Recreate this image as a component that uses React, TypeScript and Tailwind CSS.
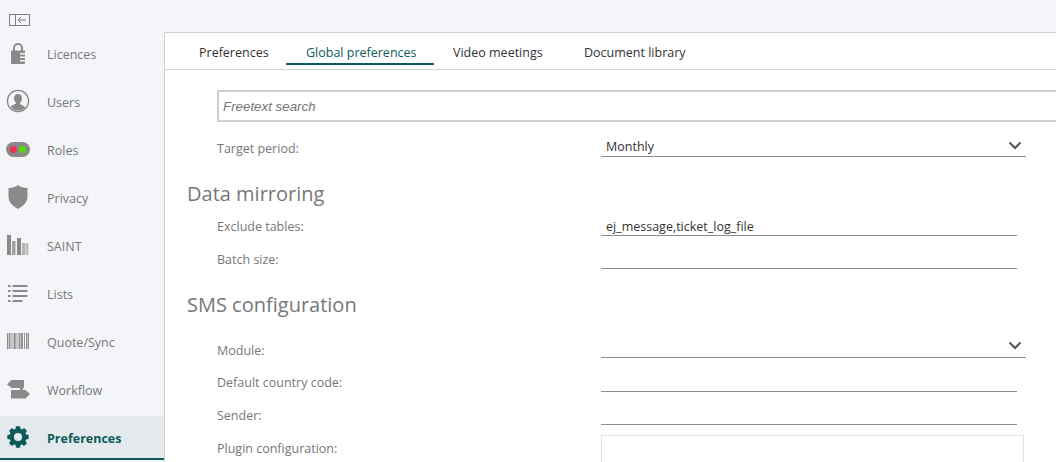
import { ReactNode } from "react";

const grey = "#8a8a8a";

const LockIcon = () => (
  <svg width="14" height="22" viewBox="0 0 14 22" fill={grey}>
    <path d="M2 9V6a5 5 0 0 1 10 0v3h-2V6a3 3 0 0 0-6 0v3z" />
    <path d="M0 8.500h14v2.500H9v1.500h5v2H9v1.500h5v2H9v1.500h5v1.500a1 1 0 0 1-1 1H1a1 1 0 0 1-1-1z" />
  </svg>
);

const UserIcon = () => (
  <svg width="24" height="24" viewBox="0 0 24 24">
    <circle cx="12" cy="12" r="10.6" fill="none" stroke={grey} strokeWidth="1.3" />
    <path
      fill={grey}
      d="M12 5c2.600 0 4 2 4 4.400 0 2-1 3.600-2 4.600v1.200c1.800.8 4 1.400 5.300 3.300A9.500 9.500 0 0 1 12 21.500a9.500 9.500 0 0 1-7.300-3.500C6 16.100 8.200 15.500 10 14.700V14c-1-1-2-2.600-2-4.600C8 7 9.400 5 12 5z"
    />
  </svg>
);

const RolesIcon = () => (
  <svg width="24" height="15" viewBox="0 0 24 15">
    <rect x="0" y="0" width="24" height="15" rx="7.500" fill={grey} />
    <circle cx="7.300" cy="7.500" r="3.500" fill="#f0304f" />
    <circle cx="16.500" cy="7.500" r="3.500" fill="#55d808" />
  </svg>
);

const ShieldIcon = () => (
  <svg width="20" height="24" viewBox="0 0 20 24" fill={grey}>
    <path d="M10 0c2 1.800 5 2.800 9.500 3v9c0 5-4 9-9.500 12C4.500 21 .5 17 .5 12V3C5 2.800 8 1.800 10 0z" />
  </svg>
);

const BarsIcon = () => (
  <svg width="22" height="20" viewBox="0 0 22 20" fill={grey}>
    <rect x="0" y="0" width="4" height="20" />
    <rect x="5" y="6" width="3.500" height="14" opacity="0.8" />
    <rect x="10" y="3" width="4" height="17" />
    <rect x="15" y="8" width="3.500" height="12" opacity="0.6" />
    <rect x="19" y="8" width="2.500" height="12" opacity="0.5" />
  </svg>
);

const ListIcon = () => (
  <svg width="20" height="19" viewBox="0 0 20 19" fill={grey}>
    <rect x="0" y="1" width="2.500" height="2" />
    <rect x="4.500" y="1" width="15" height="2" />
    <rect x="0" y="6" width="2.500" height="2" />
    <rect x="4.500" y="6" width="15" height="2" />
    <rect x="0" y="11" width="2.500" height="2" />
    <rect x="4.500" y="11" width="15" height="2" />
    <rect x="0" y="16" width="2.500" height="2" />
    <rect x="4.500" y="16" width="10" height="2" />
  </svg>
);

const BarcodeIcon = () => (
  <svg width="22" height="16" viewBox="0 0 22 16" fill={grey}>
    {[0, 2, 3.500, 5.500, 7, 8.500, 10.500, 12, 13.500, 15, 17, 19, 20.500].map((x, i) => (
      <rect key={i} x={x} y="0" width={i % 4 === 0 ? 1.400 : 0.900} height="16" />
    ))}
  </svg>
);

const SignIcon = () => (
  <svg width="23" height="19" viewBox="0 0 23 19" fill={grey}>
    <path d="M4.500 0H17v8H4.500L0 4.200z" />
    <path d="M4 10h14.500l4.500 4-4.500 4.500H4z" />
    <rect x="13" y="8" width="3" height="2" />
  </svg>
);

const GearIcon = () => (
  <svg width="22" height="22" viewBox="0 0 22 22" fill="#0b5c58">
    <circle cx="11" cy="11" r="6.300" fill="none" stroke="#0b5c58" strokeWidth="4.400" />
    {[0, 45, 90, 135, 180, 225, 270, 315].map((a) => (
      <rect key={a} x="8.700" y="0.300" width="4.600" height="4" rx="1" transform={`rotate(${a} 11 11)`} />
    ))}
  </svg>
);

const ChevronIcon = () => (
  <svg width="14" height="9" viewBox="0 0 14 9" fill="none" stroke="#555" strokeWidth="2">
    <path d="M1.500 1.500 7 7l5.500-5.500" />
  </svg>
);

const CollapseIcon = () => (
  <svg width="21" height="12" viewBox="0 0 21 12" fill="none" stroke="#7d7d7d">
    <rect x="0.500" y="0.500" width="20" height="11" />
    <path d="M6.500 1v10" />
    <path d="M17 6H9M12 3l-3 3 3 3" />
  </svg>
);

const navItems: { label: string; icon: ReactNode }[] = [
  { label: "Licences", icon: <LockIcon /> },
  { label: "Users", icon: <UserIcon /> },
  { label: "Roles", icon: <RolesIcon /> },
  { label: "Privacy", icon: <ShieldIcon /> },
  { label: "SAINT", icon: <BarsIcon /> },
  { label: "Lists", icon: <ListIcon /> },
  { label: "Quote/Sync", icon: <BarcodeIcon /> },
  { label: "Workflow", icon: <SignIcon /> },
];

function Field({ label, className, children }: { label: string; className: string; children?: ReactNode }) {
  return (
    <div className={`flex ${className}`}>
      <div className="w-[414px] pl-[30px] text-[12.5px] leading-[17px] text-[#777]">{label}</div>
      {children}
    </div>
  );
}

function TextLine({ value, className }: { value?: string; className: string }) {
  return (
    <div className={`w-[416px] border-b border-[#8c8c8c] pl-[5px] text-[12.5px] leading-[17px] text-[#333] ${className}`}>
      {value}
    </div>
  );
}

function SelectLine({ value, className }: { value?: string; className: string }) {
  return (
    <div className={`flex w-[425px] items-start justify-between border-b border-[#8c8c8c] pl-[5px] pr-[4px] text-[12.5px] leading-[17px] text-[#333] ${className}`}>
      <span>{value}</span>
      <span className="mt-[3px]">
        <ChevronIcon />
      </span>
    </div>
  );
}

export default function App() {
  return (
    <div className="flex h-[462px] w-[1056px] flex-col overflow-hidden bg-[#f4f5f8] font-['Open_Sans',sans-serif]">
      <div className="flex h-[32px] shrink-0 items-start pl-[9px] pt-[14px]">
        <CollapseIcon />
      </div>
      <div className="flex min-h-0 flex-1">
        <nav className="w-[164px] shrink-0">
          {navItems.map((item) => (
            <div key={item.label} className="flex h-[48px] items-center pb-[2px]">
              <div className="mb-[4px] flex w-[47px] shrink-0 justify-center pr-[11px]">{item.icon}</div>
              <span className="text-[12.5px] text-[#777]">{item.label}</span>
            </div>
          ))}
          <div className="flex h-[44px] items-center border-b-2 border-[#0b5c58] bg-[#e4e9ed] pt-[5px]">
            <div className="mb-[6px] flex w-[47px] shrink-0 justify-center pr-[11px]">
              <GearIcon />
            </div>
            <span className="text-[12.5px] font-bold text-[#0b5c58]">Preferences</span>
          </div>
        </nav>
        <main className="min-w-0 flex-1 overflow-hidden border-l border-t border-[#c9d1d1] bg-white">
          <div className="flex h-[37px] items-start border-b border-[#cfd4d4] pl-[21px] text-[12.5px] text-[#333]">
            <div className="h-[32px] w-[100px] pl-[13px] pt-[11px] leading-[17px]">Preferences</div>
            <div className="h-[32px] w-[148px] border-b-2 border-[#0b5c58] pl-[20px] pt-[11px] leading-[17px] text-[#0b5c58]">
              Global preferences
            </div>
            <div className="h-[32px] w-[131px] pl-[19px] pt-[11px] leading-[17px]">Video meetings</div>
            <div className="h-[32px] pl-[19px] pt-[11px] leading-[17px]">Document library</div>
          </div>
          <div className="pl-[22px] pt-[20px]">
            <div className="ml-[30px] flex h-[32px] w-[900px] items-center border-2 border-[#c9d1cf] pl-[4px] pt-[1px] font-['Liberation_Sans',sans-serif] text-[13.33px] italic text-[#757575]">
              Freetext search
            </div>
            <Field label="Target period:" className="mt-[18px]">
              <SelectLine value="Monthly" className="-mt-[2px] h-[19px]" />
            </Field>
            <h2 className="mt-[23px] text-[20px] leading-[27px] text-[#777]">Data mirroring</h2>
            <Field label="Exclude tables:" className="mt-[11px]">
              <TextLine value="ej_message,ticket_log_file" className="h-[18px]" />
            </Field>
            <Field label="Batch size:" className="mt-[15px]">
              <TextLine className="h-[18px]" />
            </Field>
            <h2 className="mt-[22px] text-[20px] leading-[27px] text-[#777]">SMS configuration</h2>
            <Field label="Module:" className="mt-[24px]">
              <SelectLine className="-mt-[4px] h-[20px]" />
            </Field>
            <Field label="Default country code:" className="mt-[15px]">
              <TextLine className="h-[18px]" />
            </Field>
            <Field label="Sender:" className="mt-[15px]">
              <TextLine className="h-[18px]" />
            </Field>
            <Field label="Plugin configuration:" className="mt-[15px]">
              <div className="-mt-[5px] h-[60px] w-[423px] border border-[#e0e0e0]" />
            </Field>
          </div>
        </main>
      </div>
    </div>
  );
}
